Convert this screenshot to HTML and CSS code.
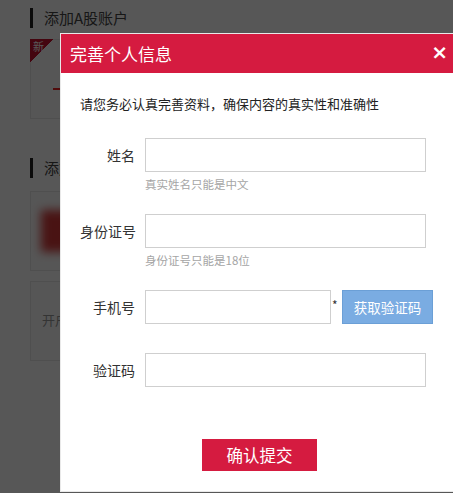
FILE: index.html
```html
<!DOCTYPE html>
<html lang="zh-CN">
<head>
<meta charset="utf-8">
<title>完善个人信息</title>
<link rel="stylesheet" href="styles.css">
</head>
<body>
<div class="page">
  <h2 class="sec-title">添加A股账户</h2>
  <div class="card card-new">
    <span class="badge"><span class="badge-text">新</span></span>
    <span class="redline"></span>
  </div>
  <h2 class="sec-title sec-second">添加港股</h2>
  <div class="card card-blur"><div class="blur"></div></div>
  <div class="card card-open"><span class="open-text">开户</span></div>
</div>
<div class="overlay"></div>
<div class="modal">
  <div class="modal-head">
    <span class="modal-title">完善个人信息</span>
    <span class="modal-close">×</span>
  </div>
  <div class="modal-body">
    <p class="intro">请您务必认真完善资料，确保内容的真实性和准确性</p>
    <div class="row">
      <label class="lbl">姓名</label>
      <div class="field">
        <input class="inp" type="text">
        <div class="hint">真实姓名只能是中文</div>
      </div>
    </div>
    <div class="row">
      <label class="lbl">身份证号</label>
      <div class="field">
        <input class="inp" type="text">
        <div class="hint">身份证号只能是18位</div>
      </div>
    </div>
    <div class="row row-phone">
      <label class="lbl">手机号</label>
      <div class="field field-phone">
        <input class="inp inp-phone" type="text">
        <span class="star">*</span>
        <button class="btn-code" type="button">获取验证码</button>
      </div>
    </div>
    <div class="row row-code">
      <label class="lbl">验证码</label>
      <div class="field">
        <input class="inp" type="text">
      </div>
    </div>
    <div class="actions">
      <button class="btn-submit" type="button">确认提交</button>
    </div>
    <span class="side-tab"></span>
  </div>
</div>
</body>
</html>
```

FILE: styles.css
```css
* { box-sizing: border-box; }
html, body {
  margin: 0;
  padding: 0;
  width: 453px;
  height: 493px;
  overflow: hidden;
  background: #fff;
  font-family: "Noto Sans CJK SC", "Microsoft YaHei", sans-serif;
  color: #333;
}
.page {
  padding: 8px 0 0 30px;
}
.sec-title {
  margin: 0;
  height: 20px;
  line-height: 20px;
  font-size: 15px;
  font-weight: normal;
  color: #444;
  border-left: 3px solid #222;
  padding-left: 11px;
  white-space: nowrap;
}
.sec-second { margin-top: 39px; }
.card {
  position: relative;
  width: 320px;
  height: 80px;
  margin-top: 10px;
  background: #fcfcfc;
  border: 1px solid #e6e6e6;
}
.card-new { margin-top: 11px; }
.badge {
  position: absolute;
  left: -1px;
  top: -1px;
  width: 24px;
  height: 24px;
  background: linear-gradient(135deg, #c8102e 50%, transparent 50%);
}
.badge-text {
  position: absolute;
  left: 3px;
  top: 1px;
  font-size: 11px;
  line-height: 13px;
  color: #fff;
}
.redline {
  position: absolute;
  left: 22px;
  top: 48px;
  width: 20px;
  height: 2px;
  background: #e22;
}
.card-blur { margin-top: 13px; }
.blur {
  position: absolute;
  left: 10px;
  top: 18px;
  width: 40px;
  height: 42px;
  background: #d63a3a;
  filter: blur(5px);
}
.open-text {
  position: absolute;
  left: 11px;
  top: 28px;
  font-size: 13px;
  color: #999;
}
.overlay {
  position: fixed;
  inset: 0;
  background: rgba(0, 0, 0, 0.66);
}
.modal {
  position: absolute;
  left: 60px;
  top: 33px;
  width: 398px;
  border: 1px solid #e9e9e9;
  background: #fff;
}
.modal-head {
  height: 39px;
  background: #d51b40;
  display: flex;
  align-items: center;
  justify-content: space-between;
  padding: 0 9px 0 9px;
}
.modal-title {
  color: #fff;
  font-size: 17px;
}
.modal-close {
  color: #fff;
  font-size: 20px;
  font-weight: bold;
  font-family: "DejaVu Sans", sans-serif;
  line-height: 20px;
  margin-top: -4px;
}
.modal-body {
  position: relative;
  height: 418px;
  padding: 21px 0 0 19px;
}
.intro {
  margin: 0;
  font-size: 13px;
  line-height: 20px;
  color: #222;
}
.row {
  display: grid;
  grid-template-columns: 55px 1fr;
  column-gap: 10px;
  align-items: start;
  margin-top: 24px;
}
.row + .row { margin-top: 22px; }
.row.row-code { margin-top: 29px; }
.lbl {
  text-align: right;
  font-size: 14px;
  line-height: 34px;
  height: 34px;
  white-space: nowrap;
  color: #333;
}
.field { display: flex; flex-direction: column; }
.inp {
  width: 281px;
  height: 34px;
  border: 1px solid #cfcfcf;
  background: #fff;
  margin: 0;
  padding: 0 8px;
  outline: none;
}
.hint {
  margin-top: 4px;
  font-size: 11.5px;
  line-height: 16px;
  color: #a5a5a5;
}
.field-phone {
  flex-direction: row;
  align-items: flex-start;
}
.inp-phone { width: 186px; }
.star {
  width: 11px;
  padding-left: 1px;
  font-size: 12px;
  line-height: 30px;
  color: #333;
}
.btn-code {
  width: 91px;
  height: 34px;
  margin: 0;
  border: 1px solid #6b9fd6;
  background: #7aace2;
  color: #fff;
  font-family: inherit;
  font-size: 13.5px;
  padding: 0;
}
.actions {
  display: flex;
  padding-left: 122px;
  margin-top: 52px;
}
.btn-submit {
  width: 115px;
  height: 32px;
  margin: 0;
  border: none;
  background: #d51b40;
  color: #fff;
  font-family: inherit;
  font-size: 16.5px;
  padding: 0;
}
.side-tab {
  position: absolute;
  right: -8px;
  top: 388px;
  width: 12px;
  height: 22px;
  border: 1px solid #e4e4e4;
  background: #fafafa;
}
```
